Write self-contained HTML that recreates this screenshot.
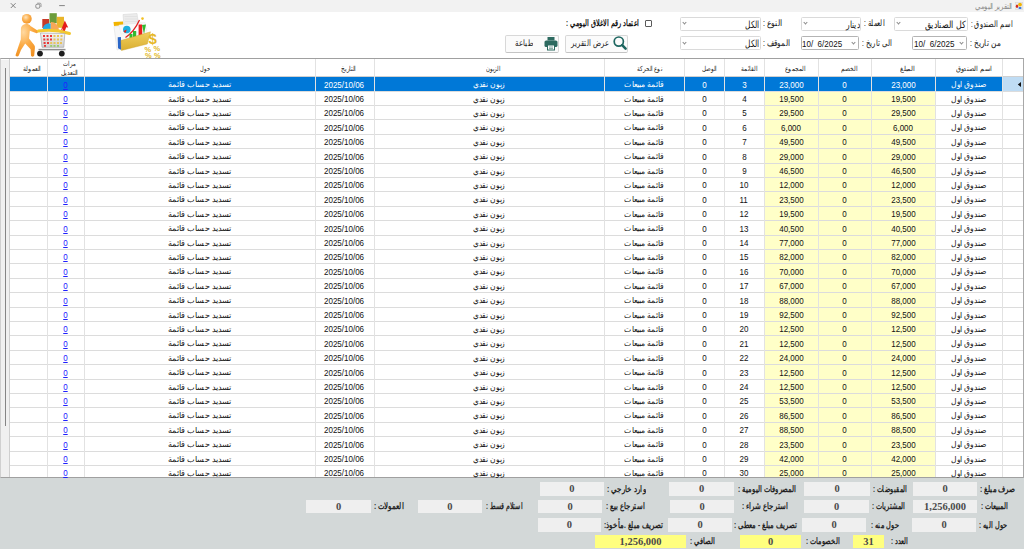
<!DOCTYPE html>
<html><head><meta charset="utf-8"><title>r</title><style>
*{margin:0;padding:0;box-sizing:border-box}
html,body{width:1024px;height:549px;overflow:hidden;background:#fff;font-family:"Liberation Sans",sans-serif;position:relative;color:#000}
.a{position:absolute}
.f{position:absolute;white-space:pre;overflow:visible}
.f>span{display:inline-block;transform-origin:0 0;white-space:pre}
.n>span{transform:scaleX(.91);transform-origin:50% 0}
.vl{position:absolute;width:1px;background:#e2e2e2}
.hl{position:absolute;height:1px;background:#dcdcdc}
.tb{position:absolute;background:#efefef}
.ytb{position:absolute;background:#ffff7f}
.cb{position:absolute;border:1px solid #dadada;background:#fff;border-radius:1.5px}
.chev{position:absolute;width:3px;height:3px;border-right:0.8px solid #8a8a8a;border-bottom:0.8px solid #8a8a8a;transform:rotate(45deg)}
</style></head><body>
<div class="a" style="left:0;top:0;width:1024px;height:12px;background:#f2f2f2"></div>
<svg class="a" style="left:0;top:0" width="80" height="12"><g stroke="#666" stroke-width="0.8" fill="none"><path d="M10.8 3.2 L15.6 8 M15.6 3.2 L10.8 8"/><rect x="35.8" y="4.2" width="4" height="4" rx="1.2" stroke="#777"/><path d="M37.2 3.2 H40 Q41 3.2 41 4.2 V7" stroke="#888"/><path d="M59.2 5.6 H64.8"/></g></svg>
<div class="f" style="left:975.00px;top:1.50px;width:37.00px;height:10px;line-height:10px;font-size:8px;color:#8a8a8a;"><span style="transform:scaleX(0.8605);direction:rtl;">التقرير اليومي</span></div>
<svg class="a" style="left:1015px;top:2px" width="8" height="8"><rect x="0.4" y="0.2" width="7.4" height="7.4" fill="#ececec" stroke="#d0d0d0" stroke-width="0.4"/><ellipse cx="2" cy="4.2" rx="1.2" ry="1.8" fill="#d02a20"/><circle cx="5" cy="2.6" r="1.9" fill="#f2b400"/><ellipse cx="5" cy="6" rx="1.6" ry="0.95" fill="#2a70e0"/></svg>
<svg class="a" style="left:10px;top:12px" width="62" height="46" viewBox="0 0 62 46">
<defs><radialGradient id="og" cx="0.35" cy="0.25" r="0.9"><stop offset="0" stop-color="#ffd9a0"/><stop offset="0.45" stop-color="#fbab45"/><stop offset="1" stop-color="#ee8a18"/></radialGradient>
<radialGradient id="hg" cx="0.4" cy="0.35" r="0.7"><stop offset="0" stop-color="#ffe4bb"/><stop offset="0.5" stop-color="#fbb050"/><stop offset="1" stop-color="#f09020"/></radialGradient>
<linearGradient id="bg2" x1="0" y1="0" x2="0" y2="1"><stop offset="0" stop-color="#f4f4f4"/><stop offset="1" stop-color="#d0d0d0"/></linearGradient></defs>
<circle cx="16.8" cy="6.8" r="4.9" fill="url(#hg)"/>
<path d="M13 13 C15 11.6 19 11.6 20.5 14 L27.5 18.6 C28.6 19.4 28.2 21.4 26.6 21.2 L19.8 18.8 L19 26.5 L24.2 33 C24.9 34 25.1 35 24.9 36 L24.2 43.5 C23.8 45 21.2 45 21 43.5 L20.6 37.2 L15.2 31.5 L11 38 L8.8 43.6 C8 45 5.2 44.6 5.6 43 L8.4 34.5 L10.8 27.5 L10.9 17.2 C10.9 15.2 11.7 13.9 13 13Z" fill="url(#og)"/>
<rect x="32.3" y="7" width="6.7" height="9" fill="#c83a28"/>
<rect x="39.5" y="1.2" width="7.3" height="10" fill="#6c9c3a"/>
<rect x="46.8" y="4.8" width="7.2" height="11" fill="#e9b52a"/>
<path d="M40.8 11.5 A6 6 0 0 0 33 18.5 L40.8 18.5Z" fill="#24a8e2"/>
<path d="M40.8 10 A8 8 0 0 1 49 18.5 L40.8 18.5Z" fill="#f7a858"/>
<path d="M50.5 19.5 L54.8 8.5 L58.2 15.5 L56.2 15.3 L54.3 20.5 L51.5 20.5 L53.2 16Z" fill="#e41c1c"/>
<path d="M28.5 19 Q44 16.5 59.5 21.5" stroke="#f2c832" stroke-width="3" fill="none" stroke-linecap="round"/>
<path d="M30.5 21 L54.8 21.5 L53.8 35.3 L32 35.3Z" fill="url(#bg2)" stroke="#9a9a9a" stroke-width="0.6"/>
<g fill="#e83838"><rect x="33" y="23" width="2" height="2"/><rect x="36.5" y="23" width="2" height="2"/><rect x="40" y="23" width="2" height="2"/><rect x="33.3" y="26.5" width="2" height="2"/><rect x="36.7" y="26.5" width="2" height="2"/><rect x="40" y="26.5" width="2" height="2"/><rect x="33.6" y="30" width="2" height="2"/><rect x="37" y="30" width="2" height="2"/><rect x="34" y="33" width="2" height="1.8"/></g>
<g fill="#e9c45a"><rect x="43.5" y="23" width="2" height="2"/><rect x="47" y="23" width="2" height="2"/><rect x="50.5" y="23" width="2" height="2"/><rect x="43.5" y="26.5" width="2" height="2"/><rect x="47" y="26.5" width="2" height="2"/><rect x="50.3" y="26.5" width="2" height="2"/><rect x="40.2" y="30" width="2" height="2"/><rect x="43.5" y="30" width="2" height="2"/><rect x="47" y="30" width="2" height="2"/><rect x="50" y="30" width="2" height="2"/></g>
<g fill="#9c6"><rect x="40.2" y="33" width="2" height="1.8"/><rect x="43.5" y="33" width="2" height="1.8"/><rect x="47" y="33" width="2" height="1.8"/></g>
<path d="M28.5 37.6 H55.5" stroke="#8c8c8c" stroke-width="1.5"/>
<circle cx="30" cy="41.6" r="2.9" fill="#1e1e1e"/><circle cx="51.8" cy="41.6" r="2.9" fill="#1e1e1e"/>
</svg>
<svg class="a" style="left:105px;top:12px" width="62" height="46" viewBox="0 0 62 46">
<defs><linearGradient id="fg" x1="0" y1="0" x2="0" y2="1"><stop offset="0" stop-color="#f2d060"/><stop offset="1" stop-color="#d9ae30"/></linearGradient></defs>
<path d="M18 2.5 L32 1.5 L33.5 12 L19 13Z" fill="#ececec" stroke="#d2d2d2" stroke-width="0.5"/>
<path d="M19.5 4.5 H32 M19.8 7 H32.5 M20 9.5 H33" stroke="#d8d8d8" stroke-width="0.5"/>
<path d="M8.5 10 L18 9.5 L18.3 13.5 L9 14Z" fill="#f2b400"/>
<circle cx="37.5" cy="6.6" r="1.3" fill="#f2c020"/>
<path d="M9 14.5 L36 11 L42 28 L12 38Z" fill="#f7f7f7" stroke="#dadada" stroke-width="0.5"/>
<path d="M14 13 L40 10.5 L42 19 L16 22Z" fill="#fafafa" stroke="#e0e0e0" stroke-width="0.4"/>
<circle cx="21.8" cy="17.5" r="3.8" fill="#20b0e0"/><path d="M21.8 17.5 L18.5 19 A3.8 3.8 0 0 0 20.5 21Z" fill="#d22"/>
<path d="M20.5 25.5 Q29 20 34.5 8" stroke="#e02020" stroke-width="1.3" fill="none"/>
<rect x="24.5" y="22" width="3" height="7" fill="#30bb30"/><rect x="28" y="19" width="3.2" height="10" fill="#30bb30"/><rect x="33.6" y="12.5" width="3.6" height="12" fill="#e82020"/>
<path d="M37 13 L41 12.5 L39 22Z" fill="#30bb30"/>
<path d="M12.7 25.3 L15.9 25 L16.4 38 L13 36.2Z" fill="#2a66c8"/>
<path d="M15.9 28.5 L45.5 19.8 L42.3 32 L16.4 38.5Z" fill="url(#fg)" stroke="#c9a028" stroke-width="0.4"/>
<text x="43.5" y="31.5" font-size="15" font-weight="bold" fill="#e6b828" font-family="Liberation Sans">$</text>
<g fill="#e2b828" font-family="Liberation Sans" font-weight="bold" font-size="7.5"><text x="39.5" y="40">%</text><text x="48.5" y="39">%</text><text x="40" y="46">%</text><text x="49" y="45.5">%</text></g>
</svg>
<div class="cb" style="left:894px;top:16.5px;width:73.5px;height:14.0px;"></div>
<div class="chev" style="left:896.9px;top:21.1px"></div>
<div class="f" style="left:925.00px;top:18.00px;width:41.00px;height:13px;line-height:13px;font-size:10px;color:#111;"><span style="transform:scaleX(0.7885);direction:rtl;">كل الصناديق</span></div>
<div class="cb" style="left:801px;top:16.5px;width:60px;height:14.0px;"></div>
<div class="chev" style="left:803.9px;top:21.1px"></div>
<div class="f" style="left:845.50px;top:18.00px;width:13.50px;height:13px;line-height:13px;font-size:10px;color:#111;"><span style="transform:scaleX(0.7500);direction:rtl;">دينار</span></div>
<div class="cb" style="left:680px;top:16.5px;width:80.5px;height:14.0px;"></div>
<div class="chev" style="left:682.9px;top:21.1px"></div>
<div class="f" style="left:745.00px;top:18.00px;width:14.70px;height:13px;line-height:13px;font-size:10px;color:#111;"><span style="transform:scaleX(0.7350);direction:rtl;">الكل</span></div>
<div class="cb" style="left:912px;top:36px;width:55px;height:14px;border-color:#b4b4b4"></div>
<div class="chev" style="left:960.4px;top:40.6px"></div>
<div class="f" style="left:913.50px;top:37.50px;width:40.50px;height:12px;line-height:12px;font-size:9.6px;color:#111;"><span style="transform:scaleX(0.8438);">10/  6/2025</span></div>
<div class="cb" style="left:801px;top:36px;width:57.5px;height:14px;border-color:#b4b4b4"></div>
<div class="chev" style="left:852.4px;top:40.6px"></div>
<div class="f" style="left:802.40px;top:37.50px;width:40.10px;height:12px;line-height:12px;font-size:9.6px;color:#111;"><span style="transform:scaleX(0.8354);">10/  6/2025</span></div>
<div class="cb" style="left:680px;top:36px;width:80.5px;height:14px;"></div>
<div class="chev" style="left:682.9px;top:40.6px"></div>
<div class="f" style="left:745.00px;top:37.00px;width:14.70px;height:13px;line-height:13px;font-size:10px;color:#111;"><span style="transform:scaleX(0.7350);direction:rtl;">الكل</span></div>
<div class="f" style="left:970.50px;top:18.50px;width:41.70px;height:11px;line-height:11px;font-size:8.5px;color:#111;"><span style="transform:scaleX(0.7316);direction:rtl;">اسم الصندوق :</span></div>
<div class="f" style="left:864.00px;top:18.00px;width:21.10px;height:11px;line-height:11px;font-size:8.5px;color:#111;"><span style="transform:scaleX(0.7536);direction:rtl;">العملة :</span></div>
<div class="f" style="left:763.30px;top:18.00px;width:20.10px;height:11px;line-height:11px;font-size:8.5px;color:#111;"><span style="transform:scaleX(0.8375);direction:rtl;">النوع :</span></div>
<div class="f" style="left:970.00px;top:38.00px;width:31.00px;height:11px;line-height:11px;font-size:8.5px;color:#111;"><span style="transform:scaleX(0.8158);direction:rtl;">من تاريخ :</span></div>
<div class="f" style="left:861.80px;top:38.00px;width:30.60px;height:11px;line-height:11px;font-size:8.5px;color:#111;"><span style="transform:scaleX(0.7650);direction:rtl;">الى تاريخ :</span></div>
<div class="f" style="left:763.30px;top:38.00px;width:27.60px;height:11px;line-height:11px;font-size:8.5px;color:#111;"><span style="transform:scaleX(0.8118);direction:rtl;">الموقف :</span></div>
<div class="a" style="left:644.5px;top:19.5px;width:7px;height:7px;border:0.9px solid #5a5a5a;border-radius:1px;background:#fff"></div>
<div class="f" style="left:565.50px;top:17.50px;width:73.25px;height:11px;line-height:11px;font-size:8.5px;color:#111;font-weight:bold;"><span style="transform:scaleX(0.7252);direction:rtl;">اعتماد رقم الاغلاق اليومي :</span></div>
<div class="a" style="left:564.5px;top:35px;width:63.5px;height:17.5px;border:1px solid #d8d8d8;border-bottom-color:#c4c4c4;border-radius:2px;background:#fbfbfb"></div>
<svg class="a" style="left:612px;top:35px" width="16" height="16"><circle cx="6.8" cy="6.6" r="4.6" stroke="#1e6660" stroke-width="1.7" fill="none"/><path d="M10.2 10.2 L13.6 13.6" stroke="#1e6660" stroke-width="2.6" stroke-linecap="round"/></svg>
<div class="f" style="left:571.00px;top:36.80px;width:38.00px;height:12px;line-height:12px;font-size:9px;color:#222;"><span style="transform:scaleX(0.7451);direction:rtl;">عرض التقرير</span></div>
<div class="a" style="left:505px;top:34.5px;width:54px;height:18px;border:1px solid #d8d8d8;border-bottom-color:#c4c4c4;border-radius:2px;background:#fbfbfb"></div>
<svg class="a" style="left:543px;top:36px" width="16" height="15"><rect x="4.5" y="1" width="7" height="3.5" fill="#2d6a60"/><rect x="1.5" y="4.5" width="13" height="6.5" rx="1.6" fill="#2d6a60"/><rect x="4.5" y="9" width="7" height="5" fill="#fff" stroke="#2d6a60" stroke-width="1"/><path d="M6 11 H10 M6 12.6 H10" stroke="#2d6a60" stroke-width="0.6"/></svg>
<div class="f" style="left:514.50px;top:36.50px;width:18.00px;height:12px;line-height:12px;font-size:9px;color:#222;"><span style="transform:scaleX(0.7826);direction:rtl;">طباعة</span></div>
<div class="a" style="left:0;top:58px;width:1024px;height:420px;background:#fff;border-top:1.5px solid #a0a0a0;border-left:1px solid #d0d0d0;border-right:1px solid #a8a8a8;border-bottom:1px solid #a0a0a0"></div>
<div class="a" style="left:1px;top:59.5px;width:9px;height:417.5px;background:#f0f0f0"></div>
<div class="a" style="left:4.5px;top:68px;width:1.3px;height:358px;background:#858585"></div>
<div class="a" style="left:764px;top:76.8px;width:171px;height:400.2px;background:#ffffc8"></div>
<div class="a" style="left:10px;top:76.8px;width:992px;height:14px;background:#0078d7"></div>
<div class="a" style="left:1002px;top:76.8px;width:21px;height:14px;background:#bfdcf4"></div>
<svg class="a" style="left:1016px;top:81px" width="6" height="7"><path d="M1.8 3.5 L5 0.9 L5 6.1Z" fill="#111"/></svg>
<div class="hl" style="left:10px;top:76px;width:1013px;background:#d0d0d0"></div>
<div class="hl" style="left:10px;top:90.60px;width:1013px"></div>
<div class="hl" style="left:10px;top:105.00px;width:1013px"></div>
<div class="hl" style="left:10px;top:119.40px;width:1013px"></div>
<div class="hl" style="left:10px;top:133.80px;width:1013px"></div>
<div class="hl" style="left:10px;top:148.20px;width:1013px"></div>
<div class="hl" style="left:10px;top:162.60px;width:1013px"></div>
<div class="hl" style="left:10px;top:177.00px;width:1013px"></div>
<div class="hl" style="left:10px;top:191.40px;width:1013px"></div>
<div class="hl" style="left:10px;top:205.80px;width:1013px"></div>
<div class="hl" style="left:10px;top:220.20px;width:1013px"></div>
<div class="hl" style="left:10px;top:234.60px;width:1013px"></div>
<div class="hl" style="left:10px;top:249.00px;width:1013px"></div>
<div class="hl" style="left:10px;top:263.40px;width:1013px"></div>
<div class="hl" style="left:10px;top:277.80px;width:1013px"></div>
<div class="hl" style="left:10px;top:292.20px;width:1013px"></div>
<div class="hl" style="left:10px;top:306.60px;width:1013px"></div>
<div class="hl" style="left:10px;top:321.00px;width:1013px"></div>
<div class="hl" style="left:10px;top:335.40px;width:1013px"></div>
<div class="hl" style="left:10px;top:349.80px;width:1013px"></div>
<div class="hl" style="left:10px;top:364.20px;width:1013px"></div>
<div class="hl" style="left:10px;top:378.60px;width:1013px"></div>
<div class="hl" style="left:10px;top:393.00px;width:1013px"></div>
<div class="hl" style="left:10px;top:407.40px;width:1013px"></div>
<div class="hl" style="left:10px;top:421.80px;width:1013px"></div>
<div class="hl" style="left:10px;top:436.20px;width:1013px"></div>
<div class="hl" style="left:10px;top:450.60px;width:1013px"></div>
<div class="hl" style="left:10px;top:465.00px;width:1013px"></div>
<div class="vl" style="left:47px;top:59px;height:418px"></div>
<div class="vl" style="left:84px;top:59px;height:418px"></div>
<div class="vl" style="left:315px;top:59px;height:418px"></div>
<div class="vl" style="left:374px;top:59px;height:418px"></div>
<div class="vl" style="left:604px;top:59px;height:418px"></div>
<div class="vl" style="left:684px;top:59px;height:418px"></div>
<div class="vl" style="left:724px;top:59px;height:418px"></div>
<div class="vl" style="left:764px;top:59px;height:418px"></div>
<div class="vl" style="left:818px;top:59px;height:418px"></div>
<div class="vl" style="left:871px;top:59px;height:418px"></div>
<div class="vl" style="left:935px;top:59px;height:418px"></div>
<div class="vl" style="left:1002px;top:59px;height:418px"></div>
<div class="vl" style="left:9px;top:59px;height:418px;background:#cfcfcf"></div>
<div class="f" style="left:23.10px;top:64.00px;width:18.15px;height:9px;line-height:9px;font-size:7px;color:#222;"><span style="transform:scaleX(0.8643);direction:rtl;">العمولة</span></div>
<div class="f" style="left:200.00px;top:64.00px;width:9.50px;height:9px;line-height:9px;font-size:7px;color:#222;"><span style="transform:scaleX(0.7308);direction:rtl;">حول</span></div>
<div class="f" style="left:341.25px;top:64.00px;width:15.00px;height:9px;line-height:9px;font-size:7px;color:#222;"><span style="transform:scaleX(0.8333);direction:rtl;">التاريخ</span></div>
<div class="f" style="left:486.00px;top:64.00px;width:14.50px;height:9px;line-height:9px;font-size:7px;color:#222;"><span style="transform:scaleX(0.7632);direction:rtl;">الزبون</span></div>
<div class="f" style="left:637.25px;top:64.00px;width:25.25px;height:9px;line-height:9px;font-size:7px;color:#222;"><span style="transform:scaleX(0.7891);direction:rtl;">نوع الحركة</span></div>
<div class="f" style="left:701.90px;top:64.00px;width:15.00px;height:9px;line-height:9px;font-size:7px;color:#222;"><span style="transform:scaleX(0.7895);direction:rtl;">الوصل</span></div>
<div class="f" style="left:740.60px;top:64.00px;width:16.30px;height:9px;line-height:9px;font-size:7px;color:#222;"><span style="transform:scaleX(0.8150);direction:rtl;">القائمة</span></div>
<div class="f" style="left:785.00px;top:64.00px;width:20.60px;height:9px;line-height:9px;font-size:7px;color:#222;"><span style="transform:scaleX(0.8240);direction:rtl;">المجموع</span></div>
<div class="f" style="left:840.60px;top:64.00px;width:16.60px;height:9px;line-height:9px;font-size:7px;color:#222;"><span style="transform:scaleX(0.8300);direction:rtl;">الخصم</span></div>
<div class="f" style="left:900.00px;top:64.00px;width:14.80px;height:9px;line-height:9px;font-size:7px;color:#222;"><span style="transform:scaleX(0.9250);direction:rtl;">المبلغ</span></div>
<div class="f" style="left:956.00px;top:64.00px;width:36.00px;height:9px;line-height:9px;font-size:7px;color:#222;"><span style="transform:scaleX(0.9231);direction:rtl;">اسم الصندوق</span></div>
<div class="f" style="left:63.10px;top:59.30px;width:12.90px;height:9px;line-height:9px;font-size:7px;color:#222;"><span style="transform:scaleX(0.7588);direction:rtl;">مرات</span></div>
<div class="f" style="left:60.90px;top:67.70px;width:17.20px;height:9px;line-height:9px;font-size:7px;color:#222;"><span style="transform:scaleX(0.8600);direction:rtl;">التعديل</span></div>
<div class="f n" style="left:47px;top:77.50px;width:37px;height:14px;line-height:14px;font-size:8.8px;text-align:center;color:#2020ff;"><span style="text-decoration:underline;">0</span></div>
<div class="f" style="left:168.25px;top:80.10px;width:62.50px;height:10px;line-height:10px;font-size:8px;color:#fff;"><span style="transform:scaleX(1.0081);direction:rtl;">تسديد حساب قائمة</span></div>
<div class="f n" style="left:315px;top:77.50px;width:59px;height:14px;line-height:14px;font-size:8.8px;text-align:center;color:#fff;"><span style="">2025/10/06</span></div>
<div class="f" style="left:473.00px;top:80.10px;width:32.00px;height:10px;line-height:10px;font-size:8px;color:#fff;"><span style="transform:scaleX(0.9412);direction:rtl;">زبون نقدي</span></div>
<div class="f" style="left:624.35px;top:80.10px;width:39.30px;height:10px;line-height:10px;font-size:8px;color:#fff;"><span style="transform:scaleX(0.9585);direction:rtl;">قائمة مبيعات</span></div>
<div class="f n" style="left:684px;top:77.50px;width:40px;height:14px;line-height:14px;font-size:8.8px;text-align:center;color:#fff;"><span style="">0</span></div>
<div class="f n" style="left:724px;top:77.50px;width:40px;height:14px;line-height:14px;font-size:8.8px;text-align:center;color:#fff;"><span style="">3</span></div>
<div class="f n" style="left:764px;top:77.50px;width:54px;height:14px;line-height:14px;font-size:8.8px;text-align:center;color:#fff;"><span style="">23,000</span></div>
<div class="f n" style="left:818px;top:77.50px;width:53px;height:14px;line-height:14px;font-size:8.8px;text-align:center;color:#fff;"><span style="">0</span></div>
<div class="f n" style="left:871px;top:77.50px;width:64px;height:14px;line-height:14px;font-size:8.8px;text-align:center;color:#fff;"><span style="">23,000</span></div>
<div class="f" style="left:951.00px;top:80.10px;width:35.00px;height:10px;line-height:10px;font-size:8px;color:#fff;"><span style="transform:scaleX(0.9459);direction:rtl;">صندوق اول</span></div>
<div class="f n" style="left:47px;top:91.90px;width:37px;height:14px;line-height:14px;font-size:8.8px;text-align:center;color:#2020ff;"><span style="text-decoration:underline;">0</span></div>
<div class="f" style="left:168.25px;top:94.50px;width:62.50px;height:10px;line-height:10px;font-size:8px;color:#111;"><span style="transform:scaleX(1.0081);direction:rtl;">تسديد حساب قائمة</span></div>
<div class="f n" style="left:315px;top:91.90px;width:59px;height:14px;line-height:14px;font-size:8.8px;text-align:center;color:#111;"><span style="">2025/10/06</span></div>
<div class="f" style="left:473.00px;top:94.50px;width:32.00px;height:10px;line-height:10px;font-size:8px;color:#111;"><span style="transform:scaleX(0.9412);direction:rtl;">زبون نقدي</span></div>
<div class="f" style="left:624.35px;top:94.50px;width:39.30px;height:10px;line-height:10px;font-size:8px;color:#111;"><span style="transform:scaleX(0.9585);direction:rtl;">قائمة مبيعات</span></div>
<div class="f n" style="left:684px;top:91.90px;width:40px;height:14px;line-height:14px;font-size:8.8px;text-align:center;color:#111;"><span style="">0</span></div>
<div class="f n" style="left:724px;top:91.90px;width:40px;height:14px;line-height:14px;font-size:8.8px;text-align:center;color:#111;"><span style="">4</span></div>
<div class="f n" style="left:764px;top:91.90px;width:54px;height:14px;line-height:14px;font-size:8.8px;text-align:center;color:#111;"><span style="">19,500</span></div>
<div class="f n" style="left:818px;top:91.90px;width:53px;height:14px;line-height:14px;font-size:8.8px;text-align:center;color:#111;"><span style="">0</span></div>
<div class="f n" style="left:871px;top:91.90px;width:64px;height:14px;line-height:14px;font-size:8.8px;text-align:center;color:#111;"><span style="">19,500</span></div>
<div class="f" style="left:951.00px;top:94.50px;width:35.00px;height:10px;line-height:10px;font-size:8px;color:#111;"><span style="transform:scaleX(0.9459);direction:rtl;">صندوق اول</span></div>
<div class="f n" style="left:47px;top:106.30px;width:37px;height:14px;line-height:14px;font-size:8.8px;text-align:center;color:#2020ff;"><span style="text-decoration:underline;">0</span></div>
<div class="f" style="left:168.25px;top:108.90px;width:62.50px;height:10px;line-height:10px;font-size:8px;color:#111;"><span style="transform:scaleX(1.0081);direction:rtl;">تسديد حساب قائمة</span></div>
<div class="f n" style="left:315px;top:106.30px;width:59px;height:14px;line-height:14px;font-size:8.8px;text-align:center;color:#111;"><span style="">2025/10/06</span></div>
<div class="f" style="left:473.00px;top:108.90px;width:32.00px;height:10px;line-height:10px;font-size:8px;color:#111;"><span style="transform:scaleX(0.9412);direction:rtl;">زبون نقدي</span></div>
<div class="f" style="left:624.35px;top:108.90px;width:39.30px;height:10px;line-height:10px;font-size:8px;color:#111;"><span style="transform:scaleX(0.9585);direction:rtl;">قائمة مبيعات</span></div>
<div class="f n" style="left:684px;top:106.30px;width:40px;height:14px;line-height:14px;font-size:8.8px;text-align:center;color:#111;"><span style="">0</span></div>
<div class="f n" style="left:724px;top:106.30px;width:40px;height:14px;line-height:14px;font-size:8.8px;text-align:center;color:#111;"><span style="">5</span></div>
<div class="f n" style="left:764px;top:106.30px;width:54px;height:14px;line-height:14px;font-size:8.8px;text-align:center;color:#111;"><span style="">29,500</span></div>
<div class="f n" style="left:818px;top:106.30px;width:53px;height:14px;line-height:14px;font-size:8.8px;text-align:center;color:#111;"><span style="">0</span></div>
<div class="f n" style="left:871px;top:106.30px;width:64px;height:14px;line-height:14px;font-size:8.8px;text-align:center;color:#111;"><span style="">29,500</span></div>
<div class="f" style="left:951.00px;top:108.90px;width:35.00px;height:10px;line-height:10px;font-size:8px;color:#111;"><span style="transform:scaleX(0.9459);direction:rtl;">صندوق اول</span></div>
<div class="f n" style="left:47px;top:120.70px;width:37px;height:14px;line-height:14px;font-size:8.8px;text-align:center;color:#2020ff;"><span style="text-decoration:underline;">0</span></div>
<div class="f" style="left:168.25px;top:123.30px;width:62.50px;height:10px;line-height:10px;font-size:8px;color:#111;"><span style="transform:scaleX(1.0081);direction:rtl;">تسديد حساب قائمة</span></div>
<div class="f n" style="left:315px;top:120.70px;width:59px;height:14px;line-height:14px;font-size:8.8px;text-align:center;color:#111;"><span style="">2025/10/06</span></div>
<div class="f" style="left:473.00px;top:123.30px;width:32.00px;height:10px;line-height:10px;font-size:8px;color:#111;"><span style="transform:scaleX(0.9412);direction:rtl;">زبون نقدي</span></div>
<div class="f" style="left:624.35px;top:123.30px;width:39.30px;height:10px;line-height:10px;font-size:8px;color:#111;"><span style="transform:scaleX(0.9585);direction:rtl;">قائمة مبيعات</span></div>
<div class="f n" style="left:684px;top:120.70px;width:40px;height:14px;line-height:14px;font-size:8.8px;text-align:center;color:#111;"><span style="">0</span></div>
<div class="f n" style="left:724px;top:120.70px;width:40px;height:14px;line-height:14px;font-size:8.8px;text-align:center;color:#111;"><span style="">6</span></div>
<div class="f n" style="left:764px;top:120.70px;width:54px;height:14px;line-height:14px;font-size:8.8px;text-align:center;color:#111;"><span style="">6,000</span></div>
<div class="f n" style="left:818px;top:120.70px;width:53px;height:14px;line-height:14px;font-size:8.8px;text-align:center;color:#111;"><span style="">0</span></div>
<div class="f n" style="left:871px;top:120.70px;width:64px;height:14px;line-height:14px;font-size:8.8px;text-align:center;color:#111;"><span style="">6,000</span></div>
<div class="f" style="left:951.00px;top:123.30px;width:35.00px;height:10px;line-height:10px;font-size:8px;color:#111;"><span style="transform:scaleX(0.9459);direction:rtl;">صندوق اول</span></div>
<div class="f n" style="left:47px;top:135.10px;width:37px;height:14px;line-height:14px;font-size:8.8px;text-align:center;color:#2020ff;"><span style="text-decoration:underline;">0</span></div>
<div class="f" style="left:168.25px;top:137.70px;width:62.50px;height:10px;line-height:10px;font-size:8px;color:#111;"><span style="transform:scaleX(1.0081);direction:rtl;">تسديد حساب قائمة</span></div>
<div class="f n" style="left:315px;top:135.10px;width:59px;height:14px;line-height:14px;font-size:8.8px;text-align:center;color:#111;"><span style="">2025/10/06</span></div>
<div class="f" style="left:473.00px;top:137.70px;width:32.00px;height:10px;line-height:10px;font-size:8px;color:#111;"><span style="transform:scaleX(0.9412);direction:rtl;">زبون نقدي</span></div>
<div class="f" style="left:624.35px;top:137.70px;width:39.30px;height:10px;line-height:10px;font-size:8px;color:#111;"><span style="transform:scaleX(0.9585);direction:rtl;">قائمة مبيعات</span></div>
<div class="f n" style="left:684px;top:135.10px;width:40px;height:14px;line-height:14px;font-size:8.8px;text-align:center;color:#111;"><span style="">0</span></div>
<div class="f n" style="left:724px;top:135.10px;width:40px;height:14px;line-height:14px;font-size:8.8px;text-align:center;color:#111;"><span style="">7</span></div>
<div class="f n" style="left:764px;top:135.10px;width:54px;height:14px;line-height:14px;font-size:8.8px;text-align:center;color:#111;"><span style="">49,500</span></div>
<div class="f n" style="left:818px;top:135.10px;width:53px;height:14px;line-height:14px;font-size:8.8px;text-align:center;color:#111;"><span style="">0</span></div>
<div class="f n" style="left:871px;top:135.10px;width:64px;height:14px;line-height:14px;font-size:8.8px;text-align:center;color:#111;"><span style="">49,500</span></div>
<div class="f" style="left:951.00px;top:137.70px;width:35.00px;height:10px;line-height:10px;font-size:8px;color:#111;"><span style="transform:scaleX(0.9459);direction:rtl;">صندوق اول</span></div>
<div class="f n" style="left:47px;top:149.50px;width:37px;height:14px;line-height:14px;font-size:8.8px;text-align:center;color:#2020ff;"><span style="text-decoration:underline;">0</span></div>
<div class="f" style="left:168.25px;top:152.10px;width:62.50px;height:10px;line-height:10px;font-size:8px;color:#111;"><span style="transform:scaleX(1.0081);direction:rtl;">تسديد حساب قائمة</span></div>
<div class="f n" style="left:315px;top:149.50px;width:59px;height:14px;line-height:14px;font-size:8.8px;text-align:center;color:#111;"><span style="">2025/10/06</span></div>
<div class="f" style="left:473.00px;top:152.10px;width:32.00px;height:10px;line-height:10px;font-size:8px;color:#111;"><span style="transform:scaleX(0.9412);direction:rtl;">زبون نقدي</span></div>
<div class="f" style="left:624.35px;top:152.10px;width:39.30px;height:10px;line-height:10px;font-size:8px;color:#111;"><span style="transform:scaleX(0.9585);direction:rtl;">قائمة مبيعات</span></div>
<div class="f n" style="left:684px;top:149.50px;width:40px;height:14px;line-height:14px;font-size:8.8px;text-align:center;color:#111;"><span style="">0</span></div>
<div class="f n" style="left:724px;top:149.50px;width:40px;height:14px;line-height:14px;font-size:8.8px;text-align:center;color:#111;"><span style="">8</span></div>
<div class="f n" style="left:764px;top:149.50px;width:54px;height:14px;line-height:14px;font-size:8.8px;text-align:center;color:#111;"><span style="">29,000</span></div>
<div class="f n" style="left:818px;top:149.50px;width:53px;height:14px;line-height:14px;font-size:8.8px;text-align:center;color:#111;"><span style="">0</span></div>
<div class="f n" style="left:871px;top:149.50px;width:64px;height:14px;line-height:14px;font-size:8.8px;text-align:center;color:#111;"><span style="">29,000</span></div>
<div class="f" style="left:951.00px;top:152.10px;width:35.00px;height:10px;line-height:10px;font-size:8px;color:#111;"><span style="transform:scaleX(0.9459);direction:rtl;">صندوق اول</span></div>
<div class="f n" style="left:47px;top:163.90px;width:37px;height:14px;line-height:14px;font-size:8.8px;text-align:center;color:#2020ff;"><span style="text-decoration:underline;">0</span></div>
<div class="f" style="left:168.25px;top:166.50px;width:62.50px;height:10px;line-height:10px;font-size:8px;color:#111;"><span style="transform:scaleX(1.0081);direction:rtl;">تسديد حساب قائمة</span></div>
<div class="f n" style="left:315px;top:163.90px;width:59px;height:14px;line-height:14px;font-size:8.8px;text-align:center;color:#111;"><span style="">2025/10/06</span></div>
<div class="f" style="left:473.00px;top:166.50px;width:32.00px;height:10px;line-height:10px;font-size:8px;color:#111;"><span style="transform:scaleX(0.9412);direction:rtl;">زبون نقدي</span></div>
<div class="f" style="left:624.35px;top:166.50px;width:39.30px;height:10px;line-height:10px;font-size:8px;color:#111;"><span style="transform:scaleX(0.9585);direction:rtl;">قائمة مبيعات</span></div>
<div class="f n" style="left:684px;top:163.90px;width:40px;height:14px;line-height:14px;font-size:8.8px;text-align:center;color:#111;"><span style="">0</span></div>
<div class="f n" style="left:724px;top:163.90px;width:40px;height:14px;line-height:14px;font-size:8.8px;text-align:center;color:#111;"><span style="">9</span></div>
<div class="f n" style="left:764px;top:163.90px;width:54px;height:14px;line-height:14px;font-size:8.8px;text-align:center;color:#111;"><span style="">46,500</span></div>
<div class="f n" style="left:818px;top:163.90px;width:53px;height:14px;line-height:14px;font-size:8.8px;text-align:center;color:#111;"><span style="">0</span></div>
<div class="f n" style="left:871px;top:163.90px;width:64px;height:14px;line-height:14px;font-size:8.8px;text-align:center;color:#111;"><span style="">46,500</span></div>
<div class="f" style="left:951.00px;top:166.50px;width:35.00px;height:10px;line-height:10px;font-size:8px;color:#111;"><span style="transform:scaleX(0.9459);direction:rtl;">صندوق اول</span></div>
<div class="f n" style="left:47px;top:178.30px;width:37px;height:14px;line-height:14px;font-size:8.8px;text-align:center;color:#2020ff;"><span style="text-decoration:underline;">0</span></div>
<div class="f" style="left:168.25px;top:180.90px;width:62.50px;height:10px;line-height:10px;font-size:8px;color:#111;"><span style="transform:scaleX(1.0081);direction:rtl;">تسديد حساب قائمة</span></div>
<div class="f n" style="left:315px;top:178.30px;width:59px;height:14px;line-height:14px;font-size:8.8px;text-align:center;color:#111;"><span style="">2025/10/06</span></div>
<div class="f" style="left:473.00px;top:180.90px;width:32.00px;height:10px;line-height:10px;font-size:8px;color:#111;"><span style="transform:scaleX(0.9412);direction:rtl;">زبون نقدي</span></div>
<div class="f" style="left:624.35px;top:180.90px;width:39.30px;height:10px;line-height:10px;font-size:8px;color:#111;"><span style="transform:scaleX(0.9585);direction:rtl;">قائمة مبيعات</span></div>
<div class="f n" style="left:684px;top:178.30px;width:40px;height:14px;line-height:14px;font-size:8.8px;text-align:center;color:#111;"><span style="">0</span></div>
<div class="f n" style="left:724px;top:178.30px;width:40px;height:14px;line-height:14px;font-size:8.8px;text-align:center;color:#111;"><span style="">10</span></div>
<div class="f n" style="left:764px;top:178.30px;width:54px;height:14px;line-height:14px;font-size:8.8px;text-align:center;color:#111;"><span style="">12,000</span></div>
<div class="f n" style="left:818px;top:178.30px;width:53px;height:14px;line-height:14px;font-size:8.8px;text-align:center;color:#111;"><span style="">0</span></div>
<div class="f n" style="left:871px;top:178.30px;width:64px;height:14px;line-height:14px;font-size:8.8px;text-align:center;color:#111;"><span style="">12,000</span></div>
<div class="f" style="left:951.00px;top:180.90px;width:35.00px;height:10px;line-height:10px;font-size:8px;color:#111;"><span style="transform:scaleX(0.9459);direction:rtl;">صندوق اول</span></div>
<div class="f n" style="left:47px;top:192.70px;width:37px;height:14px;line-height:14px;font-size:8.8px;text-align:center;color:#2020ff;"><span style="text-decoration:underline;">0</span></div>
<div class="f" style="left:168.25px;top:195.30px;width:62.50px;height:10px;line-height:10px;font-size:8px;color:#111;"><span style="transform:scaleX(1.0081);direction:rtl;">تسديد حساب قائمة</span></div>
<div class="f n" style="left:315px;top:192.70px;width:59px;height:14px;line-height:14px;font-size:8.8px;text-align:center;color:#111;"><span style="">2025/10/06</span></div>
<div class="f" style="left:473.00px;top:195.30px;width:32.00px;height:10px;line-height:10px;font-size:8px;color:#111;"><span style="transform:scaleX(0.9412);direction:rtl;">زبون نقدي</span></div>
<div class="f" style="left:624.35px;top:195.30px;width:39.30px;height:10px;line-height:10px;font-size:8px;color:#111;"><span style="transform:scaleX(0.9585);direction:rtl;">قائمة مبيعات</span></div>
<div class="f n" style="left:684px;top:192.70px;width:40px;height:14px;line-height:14px;font-size:8.8px;text-align:center;color:#111;"><span style="">0</span></div>
<div class="f n" style="left:724px;top:192.70px;width:40px;height:14px;line-height:14px;font-size:8.8px;text-align:center;color:#111;"><span style="">11</span></div>
<div class="f n" style="left:764px;top:192.70px;width:54px;height:14px;line-height:14px;font-size:8.8px;text-align:center;color:#111;"><span style="">23,500</span></div>
<div class="f n" style="left:818px;top:192.70px;width:53px;height:14px;line-height:14px;font-size:8.8px;text-align:center;color:#111;"><span style="">0</span></div>
<div class="f n" style="left:871px;top:192.70px;width:64px;height:14px;line-height:14px;font-size:8.8px;text-align:center;color:#111;"><span style="">23,500</span></div>
<div class="f" style="left:951.00px;top:195.30px;width:35.00px;height:10px;line-height:10px;font-size:8px;color:#111;"><span style="transform:scaleX(0.9459);direction:rtl;">صندوق اول</span></div>
<div class="f n" style="left:47px;top:207.10px;width:37px;height:14px;line-height:14px;font-size:8.8px;text-align:center;color:#2020ff;"><span style="text-decoration:underline;">0</span></div>
<div class="f" style="left:168.25px;top:209.70px;width:62.50px;height:10px;line-height:10px;font-size:8px;color:#111;"><span style="transform:scaleX(1.0081);direction:rtl;">تسديد حساب قائمة</span></div>
<div class="f n" style="left:315px;top:207.10px;width:59px;height:14px;line-height:14px;font-size:8.8px;text-align:center;color:#111;"><span style="">2025/10/06</span></div>
<div class="f" style="left:473.00px;top:209.70px;width:32.00px;height:10px;line-height:10px;font-size:8px;color:#111;"><span style="transform:scaleX(0.9412);direction:rtl;">زبون نقدي</span></div>
<div class="f" style="left:624.35px;top:209.70px;width:39.30px;height:10px;line-height:10px;font-size:8px;color:#111;"><span style="transform:scaleX(0.9585);direction:rtl;">قائمة مبيعات</span></div>
<div class="f n" style="left:684px;top:207.10px;width:40px;height:14px;line-height:14px;font-size:8.8px;text-align:center;color:#111;"><span style="">0</span></div>
<div class="f n" style="left:724px;top:207.10px;width:40px;height:14px;line-height:14px;font-size:8.8px;text-align:center;color:#111;"><span style="">12</span></div>
<div class="f n" style="left:764px;top:207.10px;width:54px;height:14px;line-height:14px;font-size:8.8px;text-align:center;color:#111;"><span style="">19,500</span></div>
<div class="f n" style="left:818px;top:207.10px;width:53px;height:14px;line-height:14px;font-size:8.8px;text-align:center;color:#111;"><span style="">0</span></div>
<div class="f n" style="left:871px;top:207.10px;width:64px;height:14px;line-height:14px;font-size:8.8px;text-align:center;color:#111;"><span style="">19,500</span></div>
<div class="f" style="left:951.00px;top:209.70px;width:35.00px;height:10px;line-height:10px;font-size:8px;color:#111;"><span style="transform:scaleX(0.9459);direction:rtl;">صندوق اول</span></div>
<div class="f n" style="left:47px;top:221.50px;width:37px;height:14px;line-height:14px;font-size:8.8px;text-align:center;color:#2020ff;"><span style="text-decoration:underline;">0</span></div>
<div class="f" style="left:168.25px;top:224.10px;width:62.50px;height:10px;line-height:10px;font-size:8px;color:#111;"><span style="transform:scaleX(1.0081);direction:rtl;">تسديد حساب قائمة</span></div>
<div class="f n" style="left:315px;top:221.50px;width:59px;height:14px;line-height:14px;font-size:8.8px;text-align:center;color:#111;"><span style="">2025/10/06</span></div>
<div class="f" style="left:473.00px;top:224.10px;width:32.00px;height:10px;line-height:10px;font-size:8px;color:#111;"><span style="transform:scaleX(0.9412);direction:rtl;">زبون نقدي</span></div>
<div class="f" style="left:624.35px;top:224.10px;width:39.30px;height:10px;line-height:10px;font-size:8px;color:#111;"><span style="transform:scaleX(0.9585);direction:rtl;">قائمة مبيعات</span></div>
<div class="f n" style="left:684px;top:221.50px;width:40px;height:14px;line-height:14px;font-size:8.8px;text-align:center;color:#111;"><span style="">0</span></div>
<div class="f n" style="left:724px;top:221.50px;width:40px;height:14px;line-height:14px;font-size:8.8px;text-align:center;color:#111;"><span style="">13</span></div>
<div class="f n" style="left:764px;top:221.50px;width:54px;height:14px;line-height:14px;font-size:8.8px;text-align:center;color:#111;"><span style="">40,500</span></div>
<div class="f n" style="left:818px;top:221.50px;width:53px;height:14px;line-height:14px;font-size:8.8px;text-align:center;color:#111;"><span style="">0</span></div>
<div class="f n" style="left:871px;top:221.50px;width:64px;height:14px;line-height:14px;font-size:8.8px;text-align:center;color:#111;"><span style="">40,500</span></div>
<div class="f" style="left:951.00px;top:224.10px;width:35.00px;height:10px;line-height:10px;font-size:8px;color:#111;"><span style="transform:scaleX(0.9459);direction:rtl;">صندوق اول</span></div>
<div class="f n" style="left:47px;top:235.90px;width:37px;height:14px;line-height:14px;font-size:8.8px;text-align:center;color:#2020ff;"><span style="text-decoration:underline;">0</span></div>
<div class="f" style="left:168.25px;top:238.50px;width:62.50px;height:10px;line-height:10px;font-size:8px;color:#111;"><span style="transform:scaleX(1.0081);direction:rtl;">تسديد حساب قائمة</span></div>
<div class="f n" style="left:315px;top:235.90px;width:59px;height:14px;line-height:14px;font-size:8.8px;text-align:center;color:#111;"><span style="">2025/10/06</span></div>
<div class="f" style="left:473.00px;top:238.50px;width:32.00px;height:10px;line-height:10px;font-size:8px;color:#111;"><span style="transform:scaleX(0.9412);direction:rtl;">زبون نقدي</span></div>
<div class="f" style="left:624.35px;top:238.50px;width:39.30px;height:10px;line-height:10px;font-size:8px;color:#111;"><span style="transform:scaleX(0.9585);direction:rtl;">قائمة مبيعات</span></div>
<div class="f n" style="left:684px;top:235.90px;width:40px;height:14px;line-height:14px;font-size:8.8px;text-align:center;color:#111;"><span style="">0</span></div>
<div class="f n" style="left:724px;top:235.90px;width:40px;height:14px;line-height:14px;font-size:8.8px;text-align:center;color:#111;"><span style="">14</span></div>
<div class="f n" style="left:764px;top:235.90px;width:54px;height:14px;line-height:14px;font-size:8.8px;text-align:center;color:#111;"><span style="">77,000</span></div>
<div class="f n" style="left:818px;top:235.90px;width:53px;height:14px;line-height:14px;font-size:8.8px;text-align:center;color:#111;"><span style="">0</span></div>
<div class="f n" style="left:871px;top:235.90px;width:64px;height:14px;line-height:14px;font-size:8.8px;text-align:center;color:#111;"><span style="">77,000</span></div>
<div class="f" style="left:951.00px;top:238.50px;width:35.00px;height:10px;line-height:10px;font-size:8px;color:#111;"><span style="transform:scaleX(0.9459);direction:rtl;">صندوق اول</span></div>
<div class="f n" style="left:47px;top:250.30px;width:37px;height:14px;line-height:14px;font-size:8.8px;text-align:center;color:#2020ff;"><span style="text-decoration:underline;">0</span></div>
<div class="f" style="left:168.25px;top:252.90px;width:62.50px;height:10px;line-height:10px;font-size:8px;color:#111;"><span style="transform:scaleX(1.0081);direction:rtl;">تسديد حساب قائمة</span></div>
<div class="f n" style="left:315px;top:250.30px;width:59px;height:14px;line-height:14px;font-size:8.8px;text-align:center;color:#111;"><span style="">2025/10/06</span></div>
<div class="f" style="left:473.00px;top:252.90px;width:32.00px;height:10px;line-height:10px;font-size:8px;color:#111;"><span style="transform:scaleX(0.9412);direction:rtl;">زبون نقدي</span></div>
<div class="f" style="left:624.35px;top:252.90px;width:39.30px;height:10px;line-height:10px;font-size:8px;color:#111;"><span style="transform:scaleX(0.9585);direction:rtl;">قائمة مبيعات</span></div>
<div class="f n" style="left:684px;top:250.30px;width:40px;height:14px;line-height:14px;font-size:8.8px;text-align:center;color:#111;"><span style="">0</span></div>
<div class="f n" style="left:724px;top:250.30px;width:40px;height:14px;line-height:14px;font-size:8.8px;text-align:center;color:#111;"><span style="">15</span></div>
<div class="f n" style="left:764px;top:250.30px;width:54px;height:14px;line-height:14px;font-size:8.8px;text-align:center;color:#111;"><span style="">82,000</span></div>
<div class="f n" style="left:818px;top:250.30px;width:53px;height:14px;line-height:14px;font-size:8.8px;text-align:center;color:#111;"><span style="">0</span></div>
<div class="f n" style="left:871px;top:250.30px;width:64px;height:14px;line-height:14px;font-size:8.8px;text-align:center;color:#111;"><span style="">82,000</span></div>
<div class="f" style="left:951.00px;top:252.90px;width:35.00px;height:10px;line-height:10px;font-size:8px;color:#111;"><span style="transform:scaleX(0.9459);direction:rtl;">صندوق اول</span></div>
<div class="f n" style="left:47px;top:264.70px;width:37px;height:14px;line-height:14px;font-size:8.8px;text-align:center;color:#2020ff;"><span style="text-decoration:underline;">0</span></div>
<div class="f" style="left:168.25px;top:267.30px;width:62.50px;height:10px;line-height:10px;font-size:8px;color:#111;"><span style="transform:scaleX(1.0081);direction:rtl;">تسديد حساب قائمة</span></div>
<div class="f n" style="left:315px;top:264.70px;width:59px;height:14px;line-height:14px;font-size:8.8px;text-align:center;color:#111;"><span style="">2025/10/06</span></div>
<div class="f" style="left:473.00px;top:267.30px;width:32.00px;height:10px;line-height:10px;font-size:8px;color:#111;"><span style="transform:scaleX(0.9412);direction:rtl;">زبون نقدي</span></div>
<div class="f" style="left:624.35px;top:267.30px;width:39.30px;height:10px;line-height:10px;font-size:8px;color:#111;"><span style="transform:scaleX(0.9585);direction:rtl;">قائمة مبيعات</span></div>
<div class="f n" style="left:684px;top:264.70px;width:40px;height:14px;line-height:14px;font-size:8.8px;text-align:center;color:#111;"><span style="">0</span></div>
<div class="f n" style="left:724px;top:264.70px;width:40px;height:14px;line-height:14px;font-size:8.8px;text-align:center;color:#111;"><span style="">16</span></div>
<div class="f n" style="left:764px;top:264.70px;width:54px;height:14px;line-height:14px;font-size:8.8px;text-align:center;color:#111;"><span style="">70,000</span></div>
<div class="f n" style="left:818px;top:264.70px;width:53px;height:14px;line-height:14px;font-size:8.8px;text-align:center;color:#111;"><span style="">0</span></div>
<div class="f n" style="left:871px;top:264.70px;width:64px;height:14px;line-height:14px;font-size:8.8px;text-align:center;color:#111;"><span style="">70,000</span></div>
<div class="f" style="left:951.00px;top:267.30px;width:35.00px;height:10px;line-height:10px;font-size:8px;color:#111;"><span style="transform:scaleX(0.9459);direction:rtl;">صندوق اول</span></div>
<div class="f n" style="left:47px;top:279.10px;width:37px;height:14px;line-height:14px;font-size:8.8px;text-align:center;color:#2020ff;"><span style="text-decoration:underline;">0</span></div>
<div class="f" style="left:168.25px;top:281.70px;width:62.50px;height:10px;line-height:10px;font-size:8px;color:#111;"><span style="transform:scaleX(1.0081);direction:rtl;">تسديد حساب قائمة</span></div>
<div class="f n" style="left:315px;top:279.10px;width:59px;height:14px;line-height:14px;font-size:8.8px;text-align:center;color:#111;"><span style="">2025/10/06</span></div>
<div class="f" style="left:473.00px;top:281.70px;width:32.00px;height:10px;line-height:10px;font-size:8px;color:#111;"><span style="transform:scaleX(0.9412);direction:rtl;">زبون نقدي</span></div>
<div class="f" style="left:624.35px;top:281.70px;width:39.30px;height:10px;line-height:10px;font-size:8px;color:#111;"><span style="transform:scaleX(0.9585);direction:rtl;">قائمة مبيعات</span></div>
<div class="f n" style="left:684px;top:279.10px;width:40px;height:14px;line-height:14px;font-size:8.8px;text-align:center;color:#111;"><span style="">0</span></div>
<div class="f n" style="left:724px;top:279.10px;width:40px;height:14px;line-height:14px;font-size:8.8px;text-align:center;color:#111;"><span style="">17</span></div>
<div class="f n" style="left:764px;top:279.10px;width:54px;height:14px;line-height:14px;font-size:8.8px;text-align:center;color:#111;"><span style="">67,000</span></div>
<div class="f n" style="left:818px;top:279.10px;width:53px;height:14px;line-height:14px;font-size:8.8px;text-align:center;color:#111;"><span style="">0</span></div>
<div class="f n" style="left:871px;top:279.10px;width:64px;height:14px;line-height:14px;font-size:8.8px;text-align:center;color:#111;"><span style="">67,000</span></div>
<div class="f" style="left:951.00px;top:281.70px;width:35.00px;height:10px;line-height:10px;font-size:8px;color:#111;"><span style="transform:scaleX(0.9459);direction:rtl;">صندوق اول</span></div>
<div class="f n" style="left:47px;top:293.50px;width:37px;height:14px;line-height:14px;font-size:8.8px;text-align:center;color:#2020ff;"><span style="text-decoration:underline;">0</span></div>
<div class="f" style="left:168.25px;top:296.10px;width:62.50px;height:10px;line-height:10px;font-size:8px;color:#111;"><span style="transform:scaleX(1.0081);direction:rtl;">تسديد حساب قائمة</span></div>
<div class="f n" style="left:315px;top:293.50px;width:59px;height:14px;line-height:14px;font-size:8.8px;text-align:center;color:#111;"><span style="">2025/10/06</span></div>
<div class="f" style="left:473.00px;top:296.10px;width:32.00px;height:10px;line-height:10px;font-size:8px;color:#111;"><span style="transform:scaleX(0.9412);direction:rtl;">زبون نقدي</span></div>
<div class="f" style="left:624.35px;top:296.10px;width:39.30px;height:10px;line-height:10px;font-size:8px;color:#111;"><span style="transform:scaleX(0.9585);direction:rtl;">قائمة مبيعات</span></div>
<div class="f n" style="left:684px;top:293.50px;width:40px;height:14px;line-height:14px;font-size:8.8px;text-align:center;color:#111;"><span style="">0</span></div>
<div class="f n" style="left:724px;top:293.50px;width:40px;height:14px;line-height:14px;font-size:8.8px;text-align:center;color:#111;"><span style="">18</span></div>
<div class="f n" style="left:764px;top:293.50px;width:54px;height:14px;line-height:14px;font-size:8.8px;text-align:center;color:#111;"><span style="">88,000</span></div>
<div class="f n" style="left:818px;top:293.50px;width:53px;height:14px;line-height:14px;font-size:8.8px;text-align:center;color:#111;"><span style="">0</span></div>
<div class="f n" style="left:871px;top:293.50px;width:64px;height:14px;line-height:14px;font-size:8.8px;text-align:center;color:#111;"><span style="">88,000</span></div>
<div class="f" style="left:951.00px;top:296.10px;width:35.00px;height:10px;line-height:10px;font-size:8px;color:#111;"><span style="transform:scaleX(0.9459);direction:rtl;">صندوق اول</span></div>
<div class="f n" style="left:47px;top:307.90px;width:37px;height:14px;line-height:14px;font-size:8.8px;text-align:center;color:#2020ff;"><span style="text-decoration:underline;">0</span></div>
<div class="f" style="left:168.25px;top:310.50px;width:62.50px;height:10px;line-height:10px;font-size:8px;color:#111;"><span style="transform:scaleX(1.0081);direction:rtl;">تسديد حساب قائمة</span></div>
<div class="f n" style="left:315px;top:307.90px;width:59px;height:14px;line-height:14px;font-size:8.8px;text-align:center;color:#111;"><span style="">2025/10/06</span></div>
<div class="f" style="left:473.00px;top:310.50px;width:32.00px;height:10px;line-height:10px;font-size:8px;color:#111;"><span style="transform:scaleX(0.9412);direction:rtl;">زبون نقدي</span></div>
<div class="f" style="left:624.35px;top:310.50px;width:39.30px;height:10px;line-height:10px;font-size:8px;color:#111;"><span style="transform:scaleX(0.9585);direction:rtl;">قائمة مبيعات</span></div>
<div class="f n" style="left:684px;top:307.90px;width:40px;height:14px;line-height:14px;font-size:8.8px;text-align:center;color:#111;"><span style="">0</span></div>
<div class="f n" style="left:724px;top:307.90px;width:40px;height:14px;line-height:14px;font-size:8.8px;text-align:center;color:#111;"><span style="">19</span></div>
<div class="f n" style="left:764px;top:307.90px;width:54px;height:14px;line-height:14px;font-size:8.8px;text-align:center;color:#111;"><span style="">92,500</span></div>
<div class="f n" style="left:818px;top:307.90px;width:53px;height:14px;line-height:14px;font-size:8.8px;text-align:center;color:#111;"><span style="">0</span></div>
<div class="f n" style="left:871px;top:307.90px;width:64px;height:14px;line-height:14px;font-size:8.8px;text-align:center;color:#111;"><span style="">92,500</span></div>
<div class="f" style="left:951.00px;top:310.50px;width:35.00px;height:10px;line-height:10px;font-size:8px;color:#111;"><span style="transform:scaleX(0.9459);direction:rtl;">صندوق اول</span></div>
<div class="f n" style="left:47px;top:322.30px;width:37px;height:14px;line-height:14px;font-size:8.8px;text-align:center;color:#2020ff;"><span style="text-decoration:underline;">0</span></div>
<div class="f" style="left:168.25px;top:324.90px;width:62.50px;height:10px;line-height:10px;font-size:8px;color:#111;"><span style="transform:scaleX(1.0081);direction:rtl;">تسديد حساب قائمة</span></div>
<div class="f n" style="left:315px;top:322.30px;width:59px;height:14px;line-height:14px;font-size:8.8px;text-align:center;color:#111;"><span style="">2025/10/06</span></div>
<div class="f" style="left:473.00px;top:324.90px;width:32.00px;height:10px;line-height:10px;font-size:8px;color:#111;"><span style="transform:scaleX(0.9412);direction:rtl;">زبون نقدي</span></div>
<div class="f" style="left:624.35px;top:324.90px;width:39.30px;height:10px;line-height:10px;font-size:8px;color:#111;"><span style="transform:scaleX(0.9585);direction:rtl;">قائمة مبيعات</span></div>
<div class="f n" style="left:684px;top:322.30px;width:40px;height:14px;line-height:14px;font-size:8.8px;text-align:center;color:#111;"><span style="">0</span></div>
<div class="f n" style="left:724px;top:322.30px;width:40px;height:14px;line-height:14px;font-size:8.8px;text-align:center;color:#111;"><span style="">20</span></div>
<div class="f n" style="left:764px;top:322.30px;width:54px;height:14px;line-height:14px;font-size:8.8px;text-align:center;color:#111;"><span style="">12,500</span></div>
<div class="f n" style="left:818px;top:322.30px;width:53px;height:14px;line-height:14px;font-size:8.8px;text-align:center;color:#111;"><span style="">0</span></div>
<div class="f n" style="left:871px;top:322.30px;width:64px;height:14px;line-height:14px;font-size:8.8px;text-align:center;color:#111;"><span style="">12,500</span></div>
<div class="f" style="left:951.00px;top:324.90px;width:35.00px;height:10px;line-height:10px;font-size:8px;color:#111;"><span style="transform:scaleX(0.9459);direction:rtl;">صندوق اول</span></div>
<div class="f n" style="left:47px;top:336.70px;width:37px;height:14px;line-height:14px;font-size:8.8px;text-align:center;color:#2020ff;"><span style="text-decoration:underline;">0</span></div>
<div class="f" style="left:168.25px;top:339.30px;width:62.50px;height:10px;line-height:10px;font-size:8px;color:#111;"><span style="transform:scaleX(1.0081);direction:rtl;">تسديد حساب قائمة</span></div>
<div class="f n" style="left:315px;top:336.70px;width:59px;height:14px;line-height:14px;font-size:8.8px;text-align:center;color:#111;"><span style="">2025/10/06</span></div>
<div class="f" style="left:473.00px;top:339.30px;width:32.00px;height:10px;line-height:10px;font-size:8px;color:#111;"><span style="transform:scaleX(0.9412);direction:rtl;">زبون نقدي</span></div>
<div class="f" style="left:624.35px;top:339.30px;width:39.30px;height:10px;line-height:10px;font-size:8px;color:#111;"><span style="transform:scaleX(0.9585);direction:rtl;">قائمة مبيعات</span></div>
<div class="f n" style="left:684px;top:336.70px;width:40px;height:14px;line-height:14px;font-size:8.8px;text-align:center;color:#111;"><span style="">0</span></div>
<div class="f n" style="left:724px;top:336.70px;width:40px;height:14px;line-height:14px;font-size:8.8px;text-align:center;color:#111;"><span style="">21</span></div>
<div class="f n" style="left:764px;top:336.70px;width:54px;height:14px;line-height:14px;font-size:8.8px;text-align:center;color:#111;"><span style="">12,500</span></div>
<div class="f n" style="left:818px;top:336.70px;width:53px;height:14px;line-height:14px;font-size:8.8px;text-align:center;color:#111;"><span style="">0</span></div>
<div class="f n" style="left:871px;top:336.70px;width:64px;height:14px;line-height:14px;font-size:8.8px;text-align:center;color:#111;"><span style="">12,500</span></div>
<div class="f" style="left:951.00px;top:339.30px;width:35.00px;height:10px;line-height:10px;font-size:8px;color:#111;"><span style="transform:scaleX(0.9459);direction:rtl;">صندوق اول</span></div>
<div class="f n" style="left:47px;top:351.10px;width:37px;height:14px;line-height:14px;font-size:8.8px;text-align:center;color:#2020ff;"><span style="text-decoration:underline;">0</span></div>
<div class="f" style="left:168.25px;top:353.70px;width:62.50px;height:10px;line-height:10px;font-size:8px;color:#111;"><span style="transform:scaleX(1.0081);direction:rtl;">تسديد حساب قائمة</span></div>
<div class="f n" style="left:315px;top:351.10px;width:59px;height:14px;line-height:14px;font-size:8.8px;text-align:center;color:#111;"><span style="">2025/10/06</span></div>
<div class="f" style="left:473.00px;top:353.70px;width:32.00px;height:10px;line-height:10px;font-size:8px;color:#111;"><span style="transform:scaleX(0.9412);direction:rtl;">زبون نقدي</span></div>
<div class="f" style="left:624.35px;top:353.70px;width:39.30px;height:10px;line-height:10px;font-size:8px;color:#111;"><span style="transform:scaleX(0.9585);direction:rtl;">قائمة مبيعات</span></div>
<div class="f n" style="left:684px;top:351.10px;width:40px;height:14px;line-height:14px;font-size:8.8px;text-align:center;color:#111;"><span style="">0</span></div>
<div class="f n" style="left:724px;top:351.10px;width:40px;height:14px;line-height:14px;font-size:8.8px;text-align:center;color:#111;"><span style="">22</span></div>
<div class="f n" style="left:764px;top:351.10px;width:54px;height:14px;line-height:14px;font-size:8.8px;text-align:center;color:#111;"><span style="">24,000</span></div>
<div class="f n" style="left:818px;top:351.10px;width:53px;height:14px;line-height:14px;font-size:8.8px;text-align:center;color:#111;"><span style="">0</span></div>
<div class="f n" style="left:871px;top:351.10px;width:64px;height:14px;line-height:14px;font-size:8.8px;text-align:center;color:#111;"><span style="">24,000</span></div>
<div class="f" style="left:951.00px;top:353.70px;width:35.00px;height:10px;line-height:10px;font-size:8px;color:#111;"><span style="transform:scaleX(0.9459);direction:rtl;">صندوق اول</span></div>
<div class="f n" style="left:47px;top:365.50px;width:37px;height:14px;line-height:14px;font-size:8.8px;text-align:center;color:#2020ff;"><span style="text-decoration:underline;">0</span></div>
<div class="f" style="left:168.25px;top:368.10px;width:62.50px;height:10px;line-height:10px;font-size:8px;color:#111;"><span style="transform:scaleX(1.0081);direction:rtl;">تسديد حساب قائمة</span></div>
<div class="f n" style="left:315px;top:365.50px;width:59px;height:14px;line-height:14px;font-size:8.8px;text-align:center;color:#111;"><span style="">2025/10/06</span></div>
<div class="f" style="left:473.00px;top:368.10px;width:32.00px;height:10px;line-height:10px;font-size:8px;color:#111;"><span style="transform:scaleX(0.9412);direction:rtl;">زبون نقدي</span></div>
<div class="f" style="left:624.35px;top:368.10px;width:39.30px;height:10px;line-height:10px;font-size:8px;color:#111;"><span style="transform:scaleX(0.9585);direction:rtl;">قائمة مبيعات</span></div>
<div class="f n" style="left:684px;top:365.50px;width:40px;height:14px;line-height:14px;font-size:8.8px;text-align:center;color:#111;"><span style="">0</span></div>
<div class="f n" style="left:724px;top:365.50px;width:40px;height:14px;line-height:14px;font-size:8.8px;text-align:center;color:#111;"><span style="">23</span></div>
<div class="f n" style="left:764px;top:365.50px;width:54px;height:14px;line-height:14px;font-size:8.8px;text-align:center;color:#111;"><span style="">12,500</span></div>
<div class="f n" style="left:818px;top:365.50px;width:53px;height:14px;line-height:14px;font-size:8.8px;text-align:center;color:#111;"><span style="">0</span></div>
<div class="f n" style="left:871px;top:365.50px;width:64px;height:14px;line-height:14px;font-size:8.8px;text-align:center;color:#111;"><span style="">12,500</span></div>
<div class="f" style="left:951.00px;top:368.10px;width:35.00px;height:10px;line-height:10px;font-size:8px;color:#111;"><span style="transform:scaleX(0.9459);direction:rtl;">صندوق اول</span></div>
<div class="f n" style="left:47px;top:379.90px;width:37px;height:14px;line-height:14px;font-size:8.8px;text-align:center;color:#2020ff;"><span style="text-decoration:underline;">0</span></div>
<div class="f" style="left:168.25px;top:382.50px;width:62.50px;height:10px;line-height:10px;font-size:8px;color:#111;"><span style="transform:scaleX(1.0081);direction:rtl;">تسديد حساب قائمة</span></div>
<div class="f n" style="left:315px;top:379.90px;width:59px;height:14px;line-height:14px;font-size:8.8px;text-align:center;color:#111;"><span style="">2025/10/06</span></div>
<div class="f" style="left:473.00px;top:382.50px;width:32.00px;height:10px;line-height:10px;font-size:8px;color:#111;"><span style="transform:scaleX(0.9412);direction:rtl;">زبون نقدي</span></div>
<div class="f" style="left:624.35px;top:382.50px;width:39.30px;height:10px;line-height:10px;font-size:8px;color:#111;"><span style="transform:scaleX(0.9585);direction:rtl;">قائمة مبيعات</span></div>
<div class="f n" style="left:684px;top:379.90px;width:40px;height:14px;line-height:14px;font-size:8.8px;text-align:center;color:#111;"><span style="">0</span></div>
<div class="f n" style="left:724px;top:379.90px;width:40px;height:14px;line-height:14px;font-size:8.8px;text-align:center;color:#111;"><span style="">24</span></div>
<div class="f n" style="left:764px;top:379.90px;width:54px;height:14px;line-height:14px;font-size:8.8px;text-align:center;color:#111;"><span style="">12,500</span></div>
<div class="f n" style="left:818px;top:379.90px;width:53px;height:14px;line-height:14px;font-size:8.8px;text-align:center;color:#111;"><span style="">0</span></div>
<div class="f n" style="left:871px;top:379.90px;width:64px;height:14px;line-height:14px;font-size:8.8px;text-align:center;color:#111;"><span style="">12,500</span></div>
<div class="f" style="left:951.00px;top:382.50px;width:35.00px;height:10px;line-height:10px;font-size:8px;color:#111;"><span style="transform:scaleX(0.9459);direction:rtl;">صندوق اول</span></div>
<div class="f n" style="left:47px;top:394.30px;width:37px;height:14px;line-height:14px;font-size:8.8px;text-align:center;color:#2020ff;"><span style="text-decoration:underline;">0</span></div>
<div class="f" style="left:168.25px;top:396.90px;width:62.50px;height:10px;line-height:10px;font-size:8px;color:#111;"><span style="transform:scaleX(1.0081);direction:rtl;">تسديد حساب قائمة</span></div>
<div class="f n" style="left:315px;top:394.30px;width:59px;height:14px;line-height:14px;font-size:8.8px;text-align:center;color:#111;"><span style="">2025/10/06</span></div>
<div class="f" style="left:473.00px;top:396.90px;width:32.00px;height:10px;line-height:10px;font-size:8px;color:#111;"><span style="transform:scaleX(0.9412);direction:rtl;">زبون نقدي</span></div>
<div class="f" style="left:624.35px;top:396.90px;width:39.30px;height:10px;line-height:10px;font-size:8px;color:#111;"><span style="transform:scaleX(0.9585);direction:rtl;">قائمة مبيعات</span></div>
<div class="f n" style="left:684px;top:394.30px;width:40px;height:14px;line-height:14px;font-size:8.8px;text-align:center;color:#111;"><span style="">0</span></div>
<div class="f n" style="left:724px;top:394.30px;width:40px;height:14px;line-height:14px;font-size:8.8px;text-align:center;color:#111;"><span style="">25</span></div>
<div class="f n" style="left:764px;top:394.30px;width:54px;height:14px;line-height:14px;font-size:8.8px;text-align:center;color:#111;"><span style="">53,500</span></div>
<div class="f n" style="left:818px;top:394.30px;width:53px;height:14px;line-height:14px;font-size:8.8px;text-align:center;color:#111;"><span style="">0</span></div>
<div class="f n" style="left:871px;top:394.30px;width:64px;height:14px;line-height:14px;font-size:8.8px;text-align:center;color:#111;"><span style="">53,500</span></div>
<div class="f" style="left:951.00px;top:396.90px;width:35.00px;height:10px;line-height:10px;font-size:8px;color:#111;"><span style="transform:scaleX(0.9459);direction:rtl;">صندوق اول</span></div>
<div class="f n" style="left:47px;top:408.70px;width:37px;height:14px;line-height:14px;font-size:8.8px;text-align:center;color:#2020ff;"><span style="text-decoration:underline;">0</span></div>
<div class="f" style="left:168.25px;top:411.30px;width:62.50px;height:10px;line-height:10px;font-size:8px;color:#111;"><span style="transform:scaleX(1.0081);direction:rtl;">تسديد حساب قائمة</span></div>
<div class="f n" style="left:315px;top:408.70px;width:59px;height:14px;line-height:14px;font-size:8.8px;text-align:center;color:#111;"><span style="">2025/10/06</span></div>
<div class="f" style="left:473.00px;top:411.30px;width:32.00px;height:10px;line-height:10px;font-size:8px;color:#111;"><span style="transform:scaleX(0.9412);direction:rtl;">زبون نقدي</span></div>
<div class="f" style="left:624.35px;top:411.30px;width:39.30px;height:10px;line-height:10px;font-size:8px;color:#111;"><span style="transform:scaleX(0.9585);direction:rtl;">قائمة مبيعات</span></div>
<div class="f n" style="left:684px;top:408.70px;width:40px;height:14px;line-height:14px;font-size:8.8px;text-align:center;color:#111;"><span style="">0</span></div>
<div class="f n" style="left:724px;top:408.70px;width:40px;height:14px;line-height:14px;font-size:8.8px;text-align:center;color:#111;"><span style="">26</span></div>
<div class="f n" style="left:764px;top:408.70px;width:54px;height:14px;line-height:14px;font-size:8.8px;text-align:center;color:#111;"><span style="">86,500</span></div>
<div class="f n" style="left:818px;top:408.70px;width:53px;height:14px;line-height:14px;font-size:8.8px;text-align:center;color:#111;"><span style="">0</span></div>
<div class="f n" style="left:871px;top:408.70px;width:64px;height:14px;line-height:14px;font-size:8.8px;text-align:center;color:#111;"><span style="">86,500</span></div>
<div class="f" style="left:951.00px;top:411.30px;width:35.00px;height:10px;line-height:10px;font-size:8px;color:#111;"><span style="transform:scaleX(0.9459);direction:rtl;">صندوق اول</span></div>
<div class="f n" style="left:47px;top:423.10px;width:37px;height:14px;line-height:14px;font-size:8.8px;text-align:center;color:#2020ff;"><span style="text-decoration:underline;">0</span></div>
<div class="f" style="left:168.25px;top:425.70px;width:62.50px;height:10px;line-height:10px;font-size:8px;color:#111;"><span style="transform:scaleX(1.0081);direction:rtl;">تسديد حساب قائمة</span></div>
<div class="f n" style="left:315px;top:423.10px;width:59px;height:14px;line-height:14px;font-size:8.8px;text-align:center;color:#111;"><span style="">2025/10/06</span></div>
<div class="f" style="left:473.00px;top:425.70px;width:32.00px;height:10px;line-height:10px;font-size:8px;color:#111;"><span style="transform:scaleX(0.9412);direction:rtl;">زبون نقدي</span></div>
<div class="f" style="left:624.35px;top:425.70px;width:39.30px;height:10px;line-height:10px;font-size:8px;color:#111;"><span style="transform:scaleX(0.9585);direction:rtl;">قائمة مبيعات</span></div>
<div class="f n" style="left:684px;top:423.10px;width:40px;height:14px;line-height:14px;font-size:8.8px;text-align:center;color:#111;"><span style="">0</span></div>
<div class="f n" style="left:724px;top:423.10px;width:40px;height:14px;line-height:14px;font-size:8.8px;text-align:center;color:#111;"><span style="">27</span></div>
<div class="f n" style="left:764px;top:423.10px;width:54px;height:14px;line-height:14px;font-size:8.8px;text-align:center;color:#111;"><span style="">88,500</span></div>
<div class="f n" style="left:818px;top:423.10px;width:53px;height:14px;line-height:14px;font-size:8.8px;text-align:center;color:#111;"><span style="">0</span></div>
<div class="f n" style="left:871px;top:423.10px;width:64px;height:14px;line-height:14px;font-size:8.8px;text-align:center;color:#111;"><span style="">88,500</span></div>
<div class="f" style="left:951.00px;top:425.70px;width:35.00px;height:10px;line-height:10px;font-size:8px;color:#111;"><span style="transform:scaleX(0.9459);direction:rtl;">صندوق اول</span></div>
<div class="f n" style="left:47px;top:437.50px;width:37px;height:14px;line-height:14px;font-size:8.8px;text-align:center;color:#2020ff;"><span style="text-decoration:underline;">0</span></div>
<div class="f" style="left:168.25px;top:440.10px;width:62.50px;height:10px;line-height:10px;font-size:8px;color:#111;"><span style="transform:scaleX(1.0081);direction:rtl;">تسديد حساب قائمة</span></div>
<div class="f n" style="left:315px;top:437.50px;width:59px;height:14px;line-height:14px;font-size:8.8px;text-align:center;color:#111;"><span style="">2025/10/06</span></div>
<div class="f" style="left:473.00px;top:440.10px;width:32.00px;height:10px;line-height:10px;font-size:8px;color:#111;"><span style="transform:scaleX(0.9412);direction:rtl;">زبون نقدي</span></div>
<div class="f" style="left:624.35px;top:440.10px;width:39.30px;height:10px;line-height:10px;font-size:8px;color:#111;"><span style="transform:scaleX(0.9585);direction:rtl;">قائمة مبيعات</span></div>
<div class="f n" style="left:684px;top:437.50px;width:40px;height:14px;line-height:14px;font-size:8.8px;text-align:center;color:#111;"><span style="">0</span></div>
<div class="f n" style="left:724px;top:437.50px;width:40px;height:14px;line-height:14px;font-size:8.8px;text-align:center;color:#111;"><span style="">28</span></div>
<div class="f n" style="left:764px;top:437.50px;width:54px;height:14px;line-height:14px;font-size:8.8px;text-align:center;color:#111;"><span style="">23,500</span></div>
<div class="f n" style="left:818px;top:437.50px;width:53px;height:14px;line-height:14px;font-size:8.8px;text-align:center;color:#111;"><span style="">0</span></div>
<div class="f n" style="left:871px;top:437.50px;width:64px;height:14px;line-height:14px;font-size:8.8px;text-align:center;color:#111;"><span style="">23,500</span></div>
<div class="f" style="left:951.00px;top:440.10px;width:35.00px;height:10px;line-height:10px;font-size:8px;color:#111;"><span style="transform:scaleX(0.9459);direction:rtl;">صندوق اول</span></div>
<div class="f n" style="left:47px;top:451.90px;width:37px;height:14px;line-height:14px;font-size:8.8px;text-align:center;color:#2020ff;"><span style="text-decoration:underline;">0</span></div>
<div class="f" style="left:168.25px;top:454.50px;width:62.50px;height:10px;line-height:10px;font-size:8px;color:#111;"><span style="transform:scaleX(1.0081);direction:rtl;">تسديد حساب قائمة</span></div>
<div class="f n" style="left:315px;top:451.90px;width:59px;height:14px;line-height:14px;font-size:8.8px;text-align:center;color:#111;"><span style="">2025/10/06</span></div>
<div class="f" style="left:473.00px;top:454.50px;width:32.00px;height:10px;line-height:10px;font-size:8px;color:#111;"><span style="transform:scaleX(0.9412);direction:rtl;">زبون نقدي</span></div>
<div class="f" style="left:624.35px;top:454.50px;width:39.30px;height:10px;line-height:10px;font-size:8px;color:#111;"><span style="transform:scaleX(0.9585);direction:rtl;">قائمة مبيعات</span></div>
<div class="f n" style="left:684px;top:451.90px;width:40px;height:14px;line-height:14px;font-size:8.8px;text-align:center;color:#111;"><span style="">0</span></div>
<div class="f n" style="left:724px;top:451.90px;width:40px;height:14px;line-height:14px;font-size:8.8px;text-align:center;color:#111;"><span style="">29</span></div>
<div class="f n" style="left:764px;top:451.90px;width:54px;height:14px;line-height:14px;font-size:8.8px;text-align:center;color:#111;"><span style="">42,000</span></div>
<div class="f n" style="left:818px;top:451.90px;width:53px;height:14px;line-height:14px;font-size:8.8px;text-align:center;color:#111;"><span style="">0</span></div>
<div class="f n" style="left:871px;top:451.90px;width:64px;height:14px;line-height:14px;font-size:8.8px;text-align:center;color:#111;"><span style="">42,000</span></div>
<div class="f" style="left:951.00px;top:454.50px;width:35.00px;height:10px;line-height:10px;font-size:8px;color:#111;"><span style="transform:scaleX(0.9459);direction:rtl;">صندوق اول</span></div>
<div class="f n" style="left:47px;top:466.30px;width:37px;height:14px;line-height:14px;font-size:8.8px;text-align:center;color:#2020ff;"><span style="text-decoration:underline;">0</span></div>
<div class="f" style="left:168.25px;top:468.90px;width:62.50px;height:10px;line-height:10px;font-size:8px;color:#111;"><span style="transform:scaleX(1.0081);direction:rtl;">تسديد حساب قائمة</span></div>
<div class="f n" style="left:315px;top:466.30px;width:59px;height:14px;line-height:14px;font-size:8.8px;text-align:center;color:#111;"><span style="">2025/10/06</span></div>
<div class="f" style="left:473.00px;top:468.90px;width:32.00px;height:10px;line-height:10px;font-size:8px;color:#111;"><span style="transform:scaleX(0.9412);direction:rtl;">زبون نقدي</span></div>
<div class="f" style="left:624.35px;top:468.90px;width:39.30px;height:10px;line-height:10px;font-size:8px;color:#111;"><span style="transform:scaleX(0.9585);direction:rtl;">قائمة مبيعات</span></div>
<div class="f n" style="left:684px;top:466.30px;width:40px;height:14px;line-height:14px;font-size:8.8px;text-align:center;color:#111;"><span style="">0</span></div>
<div class="f n" style="left:724px;top:466.30px;width:40px;height:14px;line-height:14px;font-size:8.8px;text-align:center;color:#111;"><span style="">30</span></div>
<div class="f n" style="left:764px;top:466.30px;width:54px;height:14px;line-height:14px;font-size:8.8px;text-align:center;color:#111;"><span style="">25,000</span></div>
<div class="f n" style="left:818px;top:466.30px;width:53px;height:14px;line-height:14px;font-size:8.8px;text-align:center;color:#111;"><span style="">0</span></div>
<div class="f n" style="left:871px;top:466.30px;width:64px;height:14px;line-height:14px;font-size:8.8px;text-align:center;color:#111;"><span style="">25,000</span></div>
<div class="f" style="left:951.00px;top:468.90px;width:35.00px;height:10px;line-height:10px;font-size:8px;color:#111;"><span style="transform:scaleX(0.9459);direction:rtl;">صندوق اول</span></div>
<div class="a" style="left:0;top:478px;width:1024px;height:71px;background:#d3d8d8"></div>
<div class="tb" style="left:913px;top:482px;width:64px;height:13.5px"></div>
<div class="f" style="left:913px;top:482px;width:64px;height:13.5px;line-height:13.5px;text-align:center;font-size:10.5px;font-weight:bold;color:#4a4a4a;font-family:'Liberation Serif',serif">0</div>
<div class="tb" style="left:913px;top:499.5px;width:64px;height:13.5px"></div>
<div class="f" style="left:913px;top:499.5px;width:64px;height:13.5px;line-height:13.5px;text-align:center;font-size:10.5px;font-weight:bold;color:#4a4a4a;font-family:'Liberation Serif',serif">1,256,000</div>
<div class="tb" style="left:912px;top:518px;width:64px;height:13.5px"></div>
<div class="f" style="left:912px;top:518px;width:64px;height:13.5px;line-height:13.5px;text-align:center;font-size:10.5px;font-weight:bold;color:#4a4a4a;font-family:'Liberation Serif',serif">0</div>
<div class="f" style="left:980.00px;top:483.50px;width:36.00px;height:11px;line-height:11px;font-size:8.5px;color:#222;font-weight:bold;"><span style="transform:scaleX(0.7826);direction:rtl;">صرف مبلغ :</span></div>
<div class="f" style="left:980.70px;top:500.50px;width:27.30px;height:11px;line-height:11px;font-size:8.5px;color:#222;font-weight:bold;"><span style="transform:scaleX(0.7378);direction:rtl;">المبيعات :</span></div>
<div class="f" style="left:979.00px;top:519.50px;width:29.00px;height:11px;line-height:11px;font-size:8.5px;color:#222;font-weight:bold;"><span style="transform:scaleX(0.7250);direction:rtl;">حول اليه :</span></div>
<div class="f" style="left:890.80px;top:536.00px;width:17.20px;height:11px;line-height:11px;font-size:8.5px;color:#222;font-weight:bold;"><span style="transform:scaleX(0.7167);direction:rtl;">العدد :</span></div>
<div class="ytb" style="left:853px;top:535px;width:31px;height:13px"></div>
<div class="f" style="left:853px;top:535px;width:31px;height:13px;line-height:13px;text-align:center;font-size:10.5px;font-weight:bold;color:#4a4a4a;font-family:'Liberation Serif',serif">31</div>
<div class="tb" style="left:804px;top:482px;width:66px;height:13.5px"></div>
<div class="f" style="left:804px;top:482px;width:66px;height:13.5px;line-height:13.5px;text-align:center;font-size:10.5px;font-weight:bold;color:#4a4a4a;font-family:'Liberation Serif',serif">0</div>
<div class="tb" style="left:804px;top:499.5px;width:65px;height:13.5px"></div>
<div class="f" style="left:804px;top:499.5px;width:65px;height:13.5px;line-height:13.5px;text-align:center;font-size:10.5px;font-weight:bold;color:#4a4a4a;font-family:'Liberation Serif',serif">0</div>
<div class="tb" style="left:802px;top:518px;width:64px;height:13.5px"></div>
<div class="f" style="left:802px;top:518px;width:64px;height:13.5px;line-height:13.5px;text-align:center;font-size:10.5px;font-weight:bold;color:#4a4a4a;font-family:'Liberation Serif',serif">0</div>
<div class="f" style="left:873.00px;top:483.50px;width:34.50px;height:11px;line-height:11px;font-size:8.5px;color:#222;font-weight:bold;"><span style="transform:scaleX(0.7188);direction:rtl;">المقبوضات :</span></div>
<div class="f" style="left:872.40px;top:500.50px;width:33.40px;height:11px;line-height:11px;font-size:8.5px;color:#222;font-weight:bold;"><span style="transform:scaleX(0.7261);direction:rtl;">المشتريات :</span></div>
<div class="f" style="left:870.50px;top:519.50px;width:28.50px;height:11px;line-height:11px;font-size:8.5px;color:#222;font-weight:bold;"><span style="transform:scaleX(0.7308);direction:rtl;">حول منه :</span></div>
<div class="f" style="left:805.80px;top:536.00px;width:33.80px;height:11px;line-height:11px;font-size:8.5px;color:#222;font-weight:bold;"><span style="transform:scaleX(0.7348);direction:rtl;">الخصومات :</span></div>
<div class="ytb" style="left:740px;top:535px;width:61px;height:13px"></div>
<div class="f" style="left:740px;top:535px;width:61px;height:13px;line-height:13px;text-align:center;font-size:10.5px;font-weight:bold;color:#4a4a4a;font-family:'Liberation Serif',serif">0</div>
<div class="tb" style="left:669px;top:482px;width:65px;height:13.5px"></div>
<div class="f" style="left:669px;top:482px;width:65px;height:13.5px;line-height:13.5px;text-align:center;font-size:10.5px;font-weight:bold;color:#4a4a4a;font-family:'Liberation Serif',serif">0</div>
<div class="tb" style="left:670px;top:499.5px;width:64px;height:13.5px"></div>
<div class="f" style="left:670px;top:499.5px;width:64px;height:13.5px;line-height:13.5px;text-align:center;font-size:10.5px;font-weight:bold;color:#4a4a4a;font-family:'Liberation Serif',serif">0</div>
<div class="tb" style="left:668px;top:518px;width:64px;height:13.5px"></div>
<div class="f" style="left:668px;top:518px;width:64px;height:13.5px;line-height:13.5px;text-align:center;font-size:10.5px;font-weight:bold;color:#4a4a4a;font-family:'Liberation Serif',serif">0</div>
<div class="f" style="left:738.00px;top:483.50px;width:59.00px;height:11px;line-height:11px;font-size:8.5px;color:#222;font-weight:bold;"><span style="transform:scaleX(0.7564);direction:rtl;">المصروفات اليومية :</span></div>
<div class="f" style="left:741.80px;top:500.50px;width:46.70px;height:11px;line-height:11px;font-size:8.5px;color:#222;font-weight:bold;"><span style="transform:scaleX(0.7656);direction:rtl;">استرجاع شراء :</span></div>
<div class="f" style="left:734.00px;top:519.50px;width:63.00px;height:11px;line-height:11px;font-size:8.5px;color:#222;font-weight:bold;"><span style="transform:scaleX(0.7590);direction:rtl;">تصريف مبلغ - معطى :</span></div>
<div class="f" style="left:689.80px;top:536.00px;width:25.20px;height:11px;line-height:11px;font-size:8.5px;color:#222;font-weight:bold;"><span style="transform:scaleX(0.7412);direction:rtl;">الصافي :</span></div>
<div class="ytb" style="left:595px;top:535px;width:91px;height:13px"></div>
<div class="f" style="left:595px;top:535px;width:91px;height:13px;line-height:13px;text-align:center;font-size:10.5px;font-weight:bold;color:#4a4a4a;font-family:'Liberation Serif',serif">1,256,000</div>
<div class="tb" style="left:540px;top:482px;width:63.5px;height:13.5px"></div>
<div class="f" style="left:540px;top:482px;width:63.5px;height:13.5px;line-height:13.5px;text-align:center;font-size:10.5px;font-weight:bold;color:#4a4a4a;font-family:'Liberation Serif',serif">0</div>
<div class="tb" style="left:538px;top:499.5px;width:64px;height:13.5px"></div>
<div class="f" style="left:538px;top:499.5px;width:64px;height:13.5px;line-height:13.5px;text-align:center;font-size:10.5px;font-weight:bold;color:#4a4a4a;font-family:'Liberation Serif',serif">0</div>
<div class="tb" style="left:538px;top:518px;width:62.60000000000002px;height:13.5px"></div>
<div class="f" style="left:538px;top:518px;width:62.60000000000002px;height:13.5px;line-height:13.5px;text-align:center;font-size:10.5px;font-weight:bold;color:#4a4a4a;font-family:'Liberation Serif',serif">0</div>
<div class="f" style="left:607.00px;top:483.50px;width:39.00px;height:11px;line-height:11px;font-size:8.5px;color:#222;font-weight:bold;"><span style="transform:scaleX(0.7800);direction:rtl;">وارد خارجي :</span></div>
<div class="f" style="left:605.70px;top:500.50px;width:39.30px;height:11px;line-height:11px;font-size:8.5px;color:#222;font-weight:bold;"><span style="transform:scaleX(0.7558);direction:rtl;">استرجاع بيع :</span></div>
<div class="f" style="left:603.50px;top:519.50px;width:59.50px;height:11px;line-height:11px;font-size:8.5px;color:#222;font-weight:bold;"><span style="transform:scaleX(0.7727);direction:rtl;">تصريف مبلغ .مأخوذ:</span></div>
<div class="tb" style="left:417.5px;top:499.5px;width:64.5px;height:13.5px"></div>
<div class="f" style="left:417.5px;top:499.5px;width:64.5px;height:13.5px;line-height:13.5px;text-align:center;font-size:10.5px;font-weight:bold;color:#4a4a4a;font-family:'Liberation Serif',serif">0</div>
<div class="f" style="left:485.70px;top:500.50px;width:37.10px;height:11px;line-height:11px;font-size:8.5px;color:#222;font-weight:bold;"><span style="transform:scaleX(0.6870);direction:rtl;">استلام قسط :</span></div>
<div class="tb" style="left:306px;top:499.5px;width:65px;height:13.5px"></div>
<div class="f" style="left:306px;top:499.5px;width:65px;height:13.5px;line-height:13.5px;text-align:center;font-size:10.5px;font-weight:bold;color:#4a4a4a;font-family:'Liberation Serif',serif">0</div>
<div class="f" style="left:374.00px;top:500.50px;width:30.00px;height:11px;line-height:11px;font-size:8.5px;color:#222;font-weight:bold;"><span style="transform:scaleX(0.7895);direction:rtl;">العمولات :</span></div>
<script>
(function(){var e=document.querySelectorAll('.f>span');for(var i=0;i<e.length;i++){var s=e[i],p=s.parentNode;if(p.style.textAlign==='center')continue;var w=s.offsetWidth,tw=parseFloat(p.style.width);if(w>0&&tw>0){s.style.transform='scaleX('+(tw/w).toFixed(4)+')';}}})();
</script>
</body></html>
